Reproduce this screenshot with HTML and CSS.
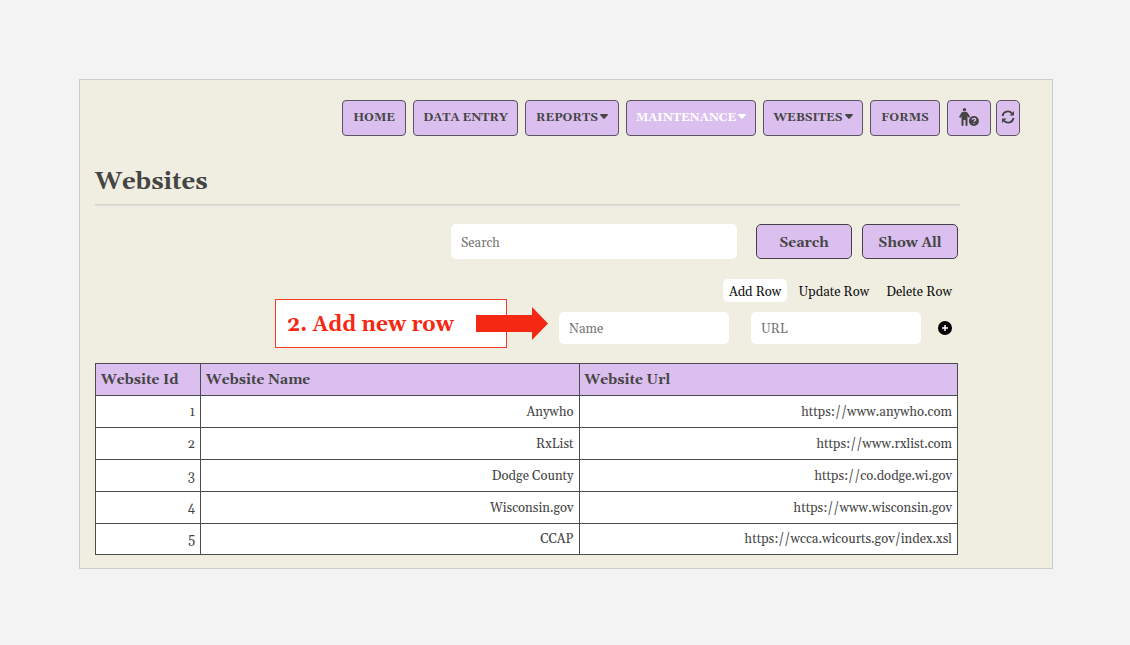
FILE: index.html
```html
<!DOCTYPE html>
<html lang="en">
<head>
<meta charset="utf-8">
<meta name="viewport" content="width=device-width, initial-scale=1">
<title>Websites</title>
<link rel="stylesheet" href="styles.css">
</head>
<body>
<div class="panel">
  <nav class="nav" aria-label="Main">
    <button type="button" class="nav-item home">HOME</button>
    <button type="button" class="nav-item data">DATA ENTRY</button>
    <button type="button" class="nav-item reports">REPORTS<svg class="caret" viewBox="0 0 8 6" aria-hidden="true"><path d="M.8 0h6.4q1.2.2.4 1.3L4.7 4.6Q4 5.300 3.300 4.600L.4 1.300Q-.4.200.8 0z"/></svg></button>
    <button type="button" class="nav-item maintenance active">MAINTENANCE<svg class="caret" viewBox="0 0 8 6" aria-hidden="true"><path d="M.8 0h6.4q1.2.2.4 1.3L4.7 4.6Q4 5.300 3.300 4.600L.4 1.300Q-.4.200.8 0z"/></svg></button>
    <button type="button" class="nav-item sites">WEBSITES<svg class="caret" viewBox="0 0 8 6" aria-hidden="true"><path d="M.8 0h6.4q1.2.2.4 1.3L4.7 4.6Q4 5.300 3.300 4.600L.4 1.300Q-.4.200.8 0z"/></svg></button>
    <button type="button" class="nav-item forms">FORMS</button>
    <button type="button" class="nav-item help" aria-label="Help">
      <svg class="help-icon" viewBox="0 0 20 18" aria-hidden="true">
        <circle cx="5.500" cy="1.700" r="1.700"/>
        <path d="M4 4h3q1.300 0 2 1.200l2.200 3.600-1.500 1L8.500 8V17q0 1-1 1t-1-1v-5h-2v5q0 1-1 1t-1-1V8L1.500 9.900 0 9l2.100-3.800Q2.700 4 4 4z"/>
        <circle cx="14.900" cy="13" r="5"/>
        <path class="question" d="M13.300 11.700q.1-1.400 1.700-1.400 1.700.1 1.700 1.400 0 .9-1.700 1.600v.5M15 14.900v1.200"/>
      </svg>
    </button>
    <button type="button" class="nav-item refresh" aria-label="Refresh">
      <svg class="refresh-icon" viewBox="0 0 14 14" aria-hidden="true">
        <path class="arc" d="M1.500 6A5.400 5.400 0 0 1 11 3.400M12.500 8A5.400 5.400 0 0 1 3 10.600"/>
        <path d="M13 1v4.500H8.500zM1 13V8.500h4.500z"/>
      </svg>
    </button>
  </nav>
  <main class="content">
    <h1 class="title">Websites</h1>
    <hr class="rule">
    <form class="search">
      <input class="field search-field" type="text" placeholder="Search" aria-label="Search">
      <button type="button" class="action">Search</button>
      <button type="button" class="action">Show All</button>
    </form>
    <div class="modes">
      <button type="button" class="mode selected">Add Row</button>
      <button type="button" class="mode">Update Row</button>
      <button type="button" class="mode">Delete Row</button>
    </div>
    <form class="entry">
      <div class="callout">2. Add new row
        <svg class="arrow" viewBox="0 0 72 33" aria-hidden="true"><path d="M0 8h56V0l16 16.500L56 33v-8H0z"/></svg>
      </div>
      <input class="field entry-field" type="text" placeholder="Name" aria-label="Name">
      <input class="field entry-field" type="text" placeholder="URL" aria-label="URL">
      <button type="button" class="add" aria-label="Add row">
        <svg class="add-icon" viewBox="0 0 14 14" aria-hidden="true"><circle cx="7" cy="7" r="7"/><path class="plus" d="M7 4v6M4 7h6"/></svg>
      </button>
    </form>
    <table class="sites-table">
      <colgroup><col class="col-id"><col class="col-name"><col class="col-url"></colgroup>
      <thead><tr><th scope="col">Website Id</th><th scope="col">Website Name</th><th scope="col">Website Url</th></tr></thead>
      <tbody>
        <tr><td>1</td><td>Anywho</td><td>https://www.anywho.com</td></tr>
        <tr><td>2</td><td>RxList</td><td>https://www.rxlist.com</td></tr>
        <tr><td>3</td><td>Dodge County</td><td>https://co.dodge.wi.gov</td></tr>
        <tr><td>4</td><td>Wisconsin.gov</td><td>https://www.wisconsin.gov</td></tr>
        <tr><td>5</td><td>CCAP</td><td>https://wcca.wicourts.gov/index.xsl</td></tr>
      </tbody>
    </table>
  </main>
</div>
</body>
</html>
```
FILE: styles.css
```css
* { box-sizing: border-box; }
body {
  margin: 0;
  padding: 79px 77px 76px 79px;
  background: #f3f3f3;
  color: #454545;
  font-family: Georgia, Gelasio, "Liberation Serif", serif;
  font-size: 13px;
}
button, input { font: inherit; color: inherit; }
svg { display: block; fill: currentColor; }
.panel {
  padding: 20px 32px 13px 15px;
  background: #f0eee1;
  border: 1px solid #c9cbcc;
}
.nav { display: flex; justify-content: flex-end; gap: 7px; }
.nav-item {
  display: flex;
  align-items: center;
  justify-content: center;
  gap: 2px;
  height: 36px;
  padding: 0 0 2px;
  border: 1px solid #5b5361;
  border-radius: 4px;
  background: #dbbfef;
  font-size: 12px;
  font-weight: bold;
  white-space: nowrap;
}
.home { width: 64px; }
.data { width: 105px; }
.reports { width: 94px; }
.maintenance { width: 130px; }
.sites { width: 100px; }
.forms { width: 70px; }
.help { width: 44px; }
.refresh { width: 24px; margin-left: -2px; border-radius: 5px; }
.active { color: #fff; }
.caret { width: 8px; height: 6px; }
.help-icon { width: 20px; height: 18px; }
.question { fill: none; stroke: #dbbfef; stroke-width: 1.2; }
.refresh-icon { width: 14px; height: 14px; }
.arc { fill: none; stroke: currentColor; stroke-width: 1.8; }
.content { margin-right: 60px; padding-right: 2px; }
.title { margin: 30px 0 6px; font-size: 24px; line-height: 32px; }
.rule {
  height: 2px;
  margin: 0 -2px 18px 0;
  border: 0;
  border-top: 1px solid #d8d5c9;
  background: #dcdbdf;
}
.search { display: flex; justify-content: flex-end; gap: 10px; }
.field {
  min-width: 0;
  padding: 2px 10px 0;
  border: 0;
  border-radius: 5px;
  background: #fff;
}
.field::placeholder { color: #757575; opacity: 1; }
.search-field { width: 286px; height: 35px; margin-right: 9px; }
.action {
  width: 96px;
  height: 35px;
  padding: 2px 0 0;
  border: 1px solid #454149;
  border-radius: 5px;
  background: #dbbfef;
  font-size: 14px;
  font-weight: bold;
}
.modes { display: flex; justify-content: flex-end; gap: 5px; margin-top: 20px; }
.mode {
  height: 23px;
  padding: 2px 6px 0;
  border: 0;
  border-radius: 5px;
  background: transparent;
  color: #111;
  white-space: nowrap;
}
.selected { background: #fff; }
.entry {
  position: relative;
  display: flex;
  justify-content: flex-end;
  align-items: center;
  gap: 22px;
  margin-top: 10px;
}
.entry-field { width: 170px; height: 32px; }
.add { margin: 0 6px 0 -5px; padding: 0; border: 0; background: none; color: #000; }
.add-icon { width: 14px; height: 14px; }
.plus { stroke: #fff; stroke-width: 1.5; }
.callout {
  position: absolute;
  right: 451px;
  top: -13px;
  width: 232px;
  height: 49px;
  padding: 3px 0 0 11px;
  border: 1px solid #f53a26;
  background: #fff;
  color: #f52813;
  font-size: 21px;
  font-weight: bold;
  line-height: 44px;
  white-space: nowrap;
}
.arrow { position: absolute; top: 7px; right: -42px; width: 72px; height: 33px; }
.sites-table {
  width: 100%;
  margin-top: 19px;
  border-collapse: collapse;
  table-layout: fixed;
  background: #fff;
}
.col-id { width: 105px; }
.sites-table th, .sites-table td {
  height: 32px;
  padding: 0 5px;
  border: 1px solid #4b4a4c;
  text-align: right;
}
.sites-table th { background: #dbbfef; font-size: 14px; text-align: left; }
.sites-table tr:last-child td { height: 31px; }
```
